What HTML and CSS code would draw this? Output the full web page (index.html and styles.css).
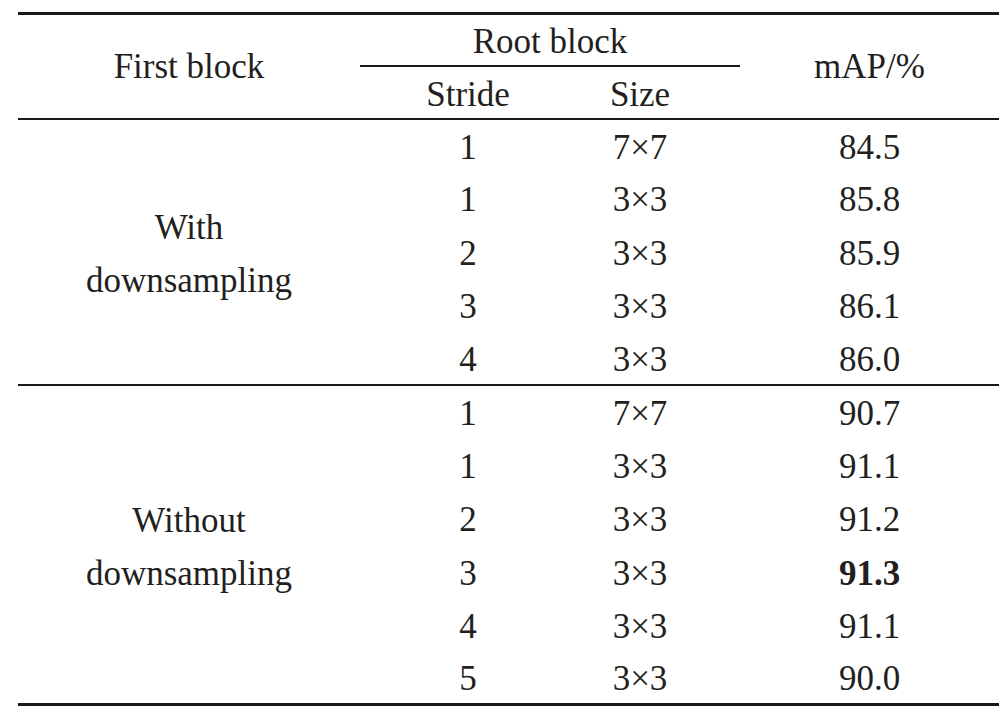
FILE: index.html
```html
<!DOCTYPE html>
<html>
<head>
<meta charset="utf-8">
<link rel="stylesheet" href="styles.css">
</head>
<body>
<table class="tbl">
  <colgroup>
    <col class="c1"><col class="c2"><col class="c3"><col class="c4">
  </colgroup>
  <thead>
    <tr class="h1">
      <th rowspan="2" class="first">First block</th>
      <th colspan="2" class="root">Root block</th>
      <th rowspan="2" class="map">mAP/%</th>
    </tr>
    <tr class="h2">
      <th class="stride">Stride</th>
      <th class="size">Size</th>
    </tr>
  </thead>
  <tbody class="grp">
    <tr><td rowspan="5" class="label">With<br>downsampling</td><td>1</td><td class="size">7×7</td><td class="map">84.5</td></tr>
    <tr><td>1</td><td class="size">3×3</td><td class="map">85.8</td></tr>
    <tr><td>2</td><td class="size">3×3</td><td class="map">85.9</td></tr>
    <tr><td>3</td><td class="size">3×3</td><td class="map">86.1</td></tr>
    <tr><td>4</td><td class="size">3×3</td><td class="map">86.0</td></tr>
  </tbody>
  <tbody class="grp last">
    <tr><td rowspan="6" class="label">Without<br>downsampling</td><td>1</td><td class="size">7×7</td><td class="map">90.7</td></tr>
    <tr><td>1</td><td class="size">3×3</td><td class="map">91.1</td></tr>
    <tr><td>2</td><td class="size">3×3</td><td class="map">91.2</td></tr>
    <tr><td>3</td><td class="size">3×3</td><td class="map"><b>91.3</b></td></tr>
    <tr><td>4</td><td class="size">3×3</td><td class="map">91.1</td></tr>
    <tr><td>5</td><td class="size">3×3</td><td class="map">90.0</td></tr>
  </tbody>
</table>
</body>
</html>
```

FILE: styles.css
```css
html, body {
  margin: 0;
  padding: 0;
  background: #ffffff;
}
body {
  padding: 12px 0 0 18px;
  font-family: "Liberation Serif", "Times New Roman", serif;
  color: #231f20;
}
.tbl {
  border-collapse: collapse;
  width: 981px;
  table-layout: fixed;
  font-size: 35px;
  border-top: 3px solid #1a1a1a;
  border-bottom: 3px solid #1a1a1a;
}
.c1 { width: 342px; }
.c2 { width: 216px; }
.c3 { width: 164px; }
.c4 { width: 259px; }
th, td {
  font-weight: normal;
  text-align: center;
  padding: 0;
  line-height: 1;
}
.h1 { height: 52px; }
.h2 { height: 53px; }
thead { border-bottom: 2px solid #1a1a1a; }
.root { border-bottom: 2px solid #1a1a1a; vertical-align: middle; padding-top: 3px; }
.stride { padding-top: 4px; }
.size { padding-right: 36px; }
th.size { padding-right: 36px; padding-top: 4px; }
.first, .map { vertical-align: middle; }
tbody tr { height: 53.3px; }
tbody td { padding-top: 3px; }
.grp { border-bottom: 2px solid #1a1a1a; }
.grp.last { border-bottom: 3px solid #1a1a1a; }
.label { line-height: 53px; padding-top: 4px; }
b { font-weight: bold; }
```
